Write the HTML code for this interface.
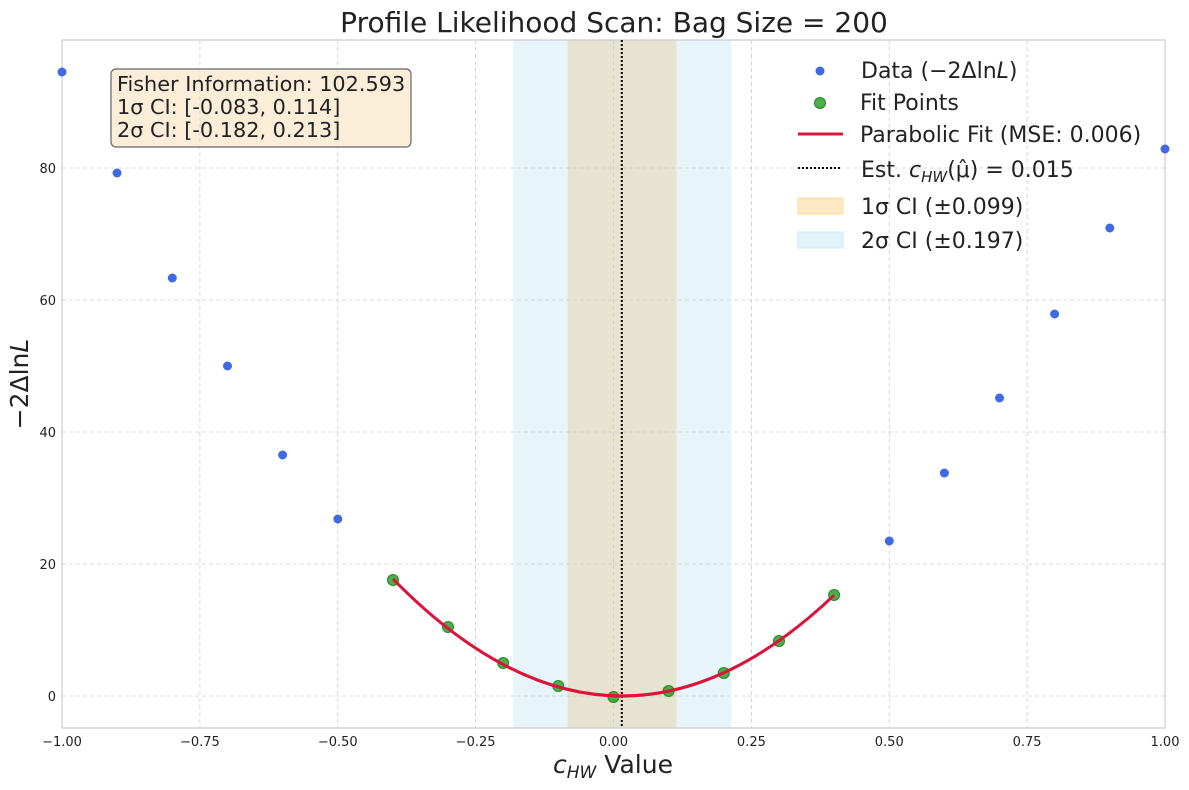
<!DOCTYPE html><html><head><meta charset="utf-8"><style>body{margin:0;background:#fff}svg{display:block;font-family:"DejaVu Sans","Liberation Sans",sans-serif}</style></head><body>
<svg width="1189" height="790" viewBox="0 0 1189 790">
<rect x="513.1" y="40" width="218" height="688" fill="#87ceeb" fill-opacity="0.2"/>
<rect x="567.7" y="40" width="108.7" height="688" fill="#e6e4d0"/>
<g stroke="#ccc" stroke-dasharray="4,3" stroke-width="0.8">
<line x1="199.9" y1="40" x2="199.9" y2="728"/><line x1="337.75" y1="40" x2="337.75" y2="728"/><line x1="475.6" y1="40" x2="475.6" y2="728"/><line x1="613.5" y1="40" x2="613.5" y2="728"/><line x1="751.4" y1="40" x2="751.4" y2="728"/><line x1="889.25" y1="40" x2="889.25" y2="728"/><line x1="1027.1" y1="40" x2="1027.1" y2="728"/>
<line x1="62" y1="696" x2="1165" y2="696"/><line x1="62" y1="564" x2="1165" y2="564"/><line x1="62" y1="432" x2="1165" y2="432"/><line x1="62" y1="300" x2="1165" y2="300"/><line x1="62" y1="168" x2="1165" y2="168"/>
</g>
<rect x="62" y="40" width="1103" height="688" fill="none" stroke="#ccc" stroke-width="1.2"/>
<line x1="621.8" y1="40" x2="621.8" y2="728" stroke="#000" stroke-width="2" stroke-dasharray="2,2"/>
<g fill="#4169e1">
<circle cx="62" cy="72" r="4.5"/><circle cx="117" cy="173" r="4.5"/><circle cx="172.3" cy="278" r="4.5"/><circle cx="227.5" cy="366" r="4.5"/><circle cx="282.6" cy="455" r="4.5"/><circle cx="337.8" cy="519" r="4.5"/>
<circle cx="889.3" cy="541" r="4.5"/><circle cx="944.4" cy="473" r="4.5"/><circle cx="999.5" cy="398" r="4.5"/><circle cx="1054.6" cy="314" r="4.5"/><circle cx="1109.8" cy="228" r="4.5"/><circle cx="1165" cy="149" r="4.5"/>
</g>
<g fill="#2ca02c" fill-opacity="0.85" stroke="#228b22" stroke-width="1">
<circle cx="393" cy="580" r="5.5"/><circle cx="448" cy="627" r="5.5"/><circle cx="503.2" cy="663" r="5.5"/><circle cx="558.3" cy="686" r="5.5"/><circle cx="613.5" cy="697" r="5.5"/><circle cx="668.6" cy="691" r="5.5"/><circle cx="723.8" cy="673" r="5.5"/><circle cx="779" cy="641" r="5.5"/><circle cx="834.1" cy="595" r="5.5"/>
</g>
<path d="M393 578.9 Q613.5 804.6 834.1 595.2" fill="none" stroke="#dc143c" stroke-width="3"/>
<g font-size="13" fill="#222" text-anchor="middle">
<text x="62" y="746">−1.00</text><text x="199.9" y="746">−0.75</text><text x="337.75" y="746">−0.50</text><text x="475.6" y="746">−0.25</text><text x="613.5" y="746">0.00</text><text x="751.4" y="746">0.25</text><text x="889.25" y="746">0.50</text><text x="1027.1" y="746">0.75</text><text x="1165" y="746">1.00</text>
</g>
<g font-size="13" fill="#222" text-anchor="end">
<text x="56" y="701">0</text><text x="56" y="569">20</text><text x="56" y="437">40</text><text x="56" y="305">60</text><text x="56" y="173">80</text>
</g>
<text x="614" y="32" font-size="28" fill="#222" text-anchor="middle">Profile Likelihood Scan: Bag Size = 200</text>
<text x="613" y="773" font-size="25" fill="#222" text-anchor="middle"><tspan font-style="italic">c</tspan><tspan font-style="italic" font-size="17" dy="5">HW</tspan><tspan dy="-5"> Value</tspan></text>
<text transform="translate(28,384) rotate(-90)" font-size="25" fill="#222" text-anchor="middle">−2Δln<tspan font-style="italic">L</tspan></text>
<rect x="111" y="69" width="300" height="78" rx="5" fill="#f5deb3" fill-opacity="0.5" stroke="#666" stroke-width="1.2"/>
<g font-size="20.8" fill="#222"><text x="117" y="91">Fisher Information: 102.593</text><text x="117" y="114">1σ CI: [-0.083, 0.114]</text><text x="117" y="137">2σ CI: [-0.182, 0.213]</text></g>
<circle cx="820" cy="71" r="4.5" fill="#4169e1"/>
<circle cx="820" cy="103" r="5.5" fill="#2ca02c" fill-opacity="0.85" stroke="#228b22"/>
<line x1="798" y1="134" x2="843" y2="134" stroke="#dc143c" stroke-width="3"/>
<line x1="798" y1="168" x2="840" y2="168" stroke="#000" stroke-width="2" stroke-dasharray="2,2"/>
<rect x="798" y="198" width="45" height="16" fill="#ffe8c4" stroke="#ffd89a"/>
<rect x="798" y="232" width="45" height="16" fill="#e3f3fa" stroke="#cfeaf5"/>
<g font-size="22" fill="#222">
<text x="861" y="78">Data (−2Δln<tspan font-style="italic">L</tspan>)</text><text x="860" y="110">Fit Points</text><text x="860" y="142">Parabolic Fit (MSE: 0.006)</text>
<text x="861" y="177">Est. <tspan font-style="italic">c</tspan><tspan font-style="italic" font-size="15" dy="5">HW</tspan><tspan dy="-5">(μ̂) = 0.015</tspan></text>
<text x="861" y="214">1σ CI (±0.099)</text><text x="861" y="248">2σ CI (±0.197)</text>
</g>
</svg></body></html>
